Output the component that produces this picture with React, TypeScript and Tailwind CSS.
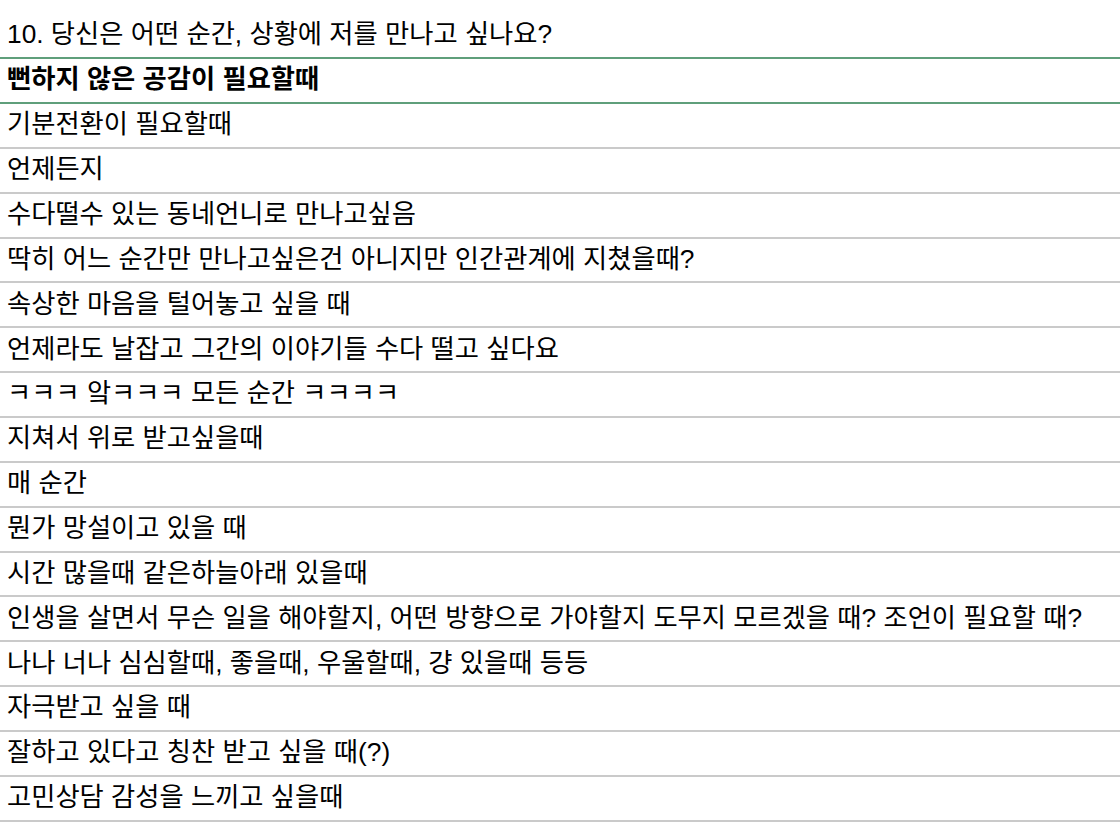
const rows = [
  '기분전환이 필요할때',
  '언제든지',
  '수다떨수 있는 동네언니로 만나고싶음',
  '딱히 어느 순간만 만나고싶은건 아니지만 인간관계에 지쳤을때?',
  '속상한 마음을 털어놓고 싶을 때',
  '언제라도 날잡고 그간의 이야기들 수다 떨고 싶다요',
  'ㅋㅋㅋ 앜ㅋㅋㅋ 모든 순간 ㅋㅋㅋㅋ',
  '지쳐서 위로 받고싶을때',
  '매 순간',
  '뭔가 망설이고 있을 때',
  '시간 많을때 같은하늘아래 있을때',
  '인생을 살면서 무슨 일을 해야할지, 어떤 방향으로 가야할지 도무지 모르겠을 때? 조언이 필요할 때?',
  '나나 너나 심심할때, 좋을때, 우울할때, 걍 있을때 등등',
  '자극받고 싶을 때',
  '잘하고 있다고 칭찬 받고 싶을 때(?)',
  '고민상담 감성을 느끼고 싶을때',
]

export default function App() {
  return (
    <div
      className="w-[1120px] h-[829px] bg-white text-black overflow-hidden"
      style={{ fontFamily: '"Liberation Sans", "Noto Sans CJK KR", sans-serif' }}
    >
      {/* question header */}
      <div className="h-[59px] flex items-end pl-[7px] pb-[10px] border-b-2 border-[#5f9f7b] text-[26.3px] leading-none whitespace-nowrap">
        10. 당신은 어떤 순간, 상황에 저를 만나고 싶나요?
      </div>

      {/* selected answer */}
      <div className="h-[45px] flex items-center pl-[7px] pb-[2px] border-b-2 border-[#5f9f7b] text-[26.3px] font-bold leading-none whitespace-nowrap">
        뻔하지 않은 공감이 필요할때
      </div>

      {rows.map((r, i) => (
        <div
          key={i}
          className="h-[44.87px] flex items-center pl-[7px] pb-[2px] border-b-2 border-[#cacaca] text-[26.3px] leading-none whitespace-nowrap"
        >
          {r}
        </div>
      ))}
    </div>
  )
}
